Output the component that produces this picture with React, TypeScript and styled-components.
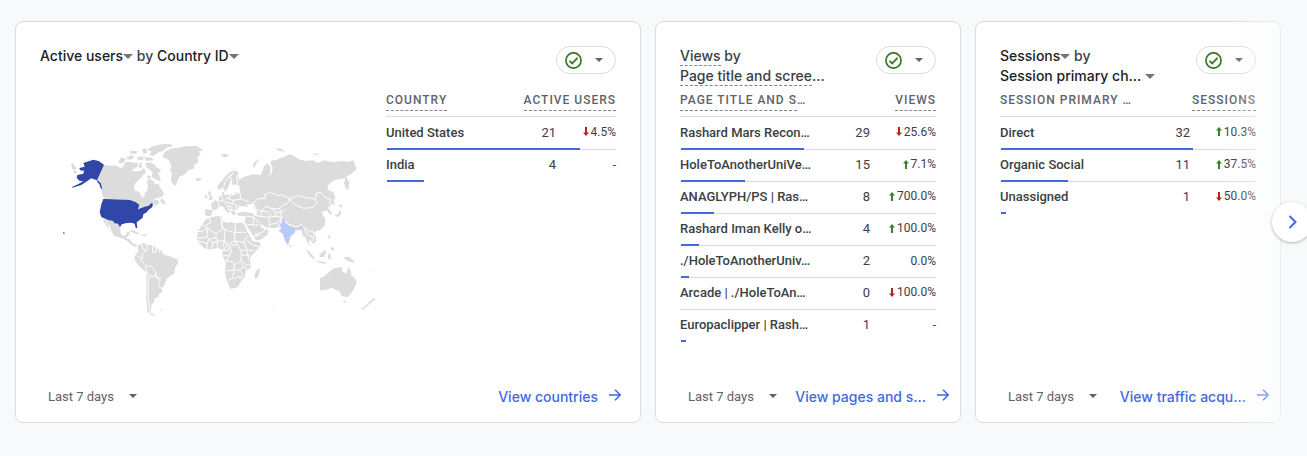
import React from "react";
import styled, { createGlobalStyle } from "styled-components";

const Global = createGlobalStyle`
  *, *::before, *::after { box-sizing: border-box; }
  body {
    margin: 0;
    background: #f8f9fb;
    color: #3c4043;
    font-family: Roboto, "Liberation Sans", sans-serif;
    font-size: 13px;
  }
  button, select { font: inherit; color: inherit; background: none; border: 0; margin: 0; padding: 0; cursor: pointer; }
`;

const Page = styled.main`
  position: relative;
  min-height: 100vh;
  overflow: hidden;
  padding: 21px 26px 33px 15px;
`;

const CardGrid = styled.div`
  display: grid;
  grid-template-columns: repeat(4, minmax(0, 1fr));
  gap: 14px;
`;

const Card = styled.section<{ $wide?: boolean }>`
  grid-column: span ${(p) => (p.$wide ? 2 : 1)};
  display: flex;
  flex-direction: column;
  min-height: 402px;
  padding: 24px 0 6px;
  background: #fff;
  border: 1px solid #dadce0;
  border-radius: 8px;
`;

const CardHead = styled.header`
  display: flex;
  justify-content: space-between;
  align-items: flex-start;
  min-height: 40px;
  padding: 0 24px;
`;

const Title = styled.h2`
  margin: 0;
  font-family: Inter, Roboto, sans-serif;
  font-size: 14px;
  font-weight: 500;
  line-height: 20px;
  white-space: nowrap;
`;

const TitleLine = styled.span`
  display: block;
`;

const Picker = styled.button`
  display: inline-flex;
  align-items: center;
  color: #202124;
  line-height: 20px;
`;

const Hint = styled.span`
  display: inline-block;
  line-height: 19px;
  border-bottom: 1px dashed #80868b;
`;

const Pill = styled.button`
  display: flex;
  align-items: center;
  justify-content: space-between;
  width: 60px;
  height: 28px;
  padding: 0 12px 0 8px;
  border: 1px solid #dadce0;
  border-radius: 14px;
`;

const CardBody = styled.div`
  display: flex;
  flex: 1;
  padding: 0 24px;
`;

const MapPane = styled.div`
  display: flex;
  flex: 1;
  align-items: center;
  min-width: 0;
  padding: 0 6px 3px 0;

  svg { width: 100%; height: auto; }
`;

const TablePane = styled.div<{ $narrow?: boolean }>`
  flex: ${(p) => (p.$narrow ? "0 0 230px" : "1")};
  min-width: 0;
`;

const Table = styled.table`
  width: 100%;
  table-layout: fixed;
  border-collapse: separate;
  border-spacing: 0;
`;

const HeadCell = styled.th<{ $right?: boolean }>`
  height: 31px;
  padding: 4px 0 0;
  border-bottom: 1px solid #dadce0;
  color: #5f6368;
  font-size: 12px;
  font-weight: 500;
  line-height: 20px;
  letter-spacing: 1px;
  text-align: ${(p) => (p.$right ? "right" : "left")};
  vertical-align: top;
  white-space: nowrap;
`;

const Row = styled.tr`
  position: relative;
`;

const Cell = styled.td<{ $kind?: "name" | "value" | "change" }>`
  height: 32px;
  padding: 0 0 2px;
  border-bottom: 1px solid #dadce0;
  text-align: ${(p) => (p.$kind === "name" ? "left" : "right")};
  font-size: ${(p) => (p.$kind === "change" ? "12px" : "13px")};
  font-weight: ${(p) => (p.$kind === "name" ? 500 : 400)};
  white-space: nowrap;

  ${Row}:first-child & { height: 33px; }
  ${Row}:last-child & { border-bottom-color: transparent; }
`;

const Bar = styled.span`
  position: absolute;
  left: 1px;
  bottom: 0;
  height: 2px;
  background: #4169e1;
`;

const Change = styled.span`
  display: inline-flex;
  align-items: center;
  gap: 2px;
`;

const CardFoot = styled.footer<{ $wide?: boolean }>`
  display: flex;
  align-items: center;
  justify-content: space-between;
  height: 40px;
  padding: 0 ${(p) => (p.$wide ? 18 : 10)}px 0 32px;
`;

const Period = styled.label`
  display: flex;
  align-items: center;
  gap: 10px;
  color: #5f6368;

  select {
    appearance: none;
    width: 71px;
    outline: none;
  }
`;

const MoreLink = styled.a`
  display: flex;
  align-items: center;
  gap: 10px;
  color: #4169e1;
  font-family: Inter, Roboto, sans-serif;
  font-size: 14px;
  font-weight: 500;
  text-decoration: none;
  white-space: nowrap;
`;

const EdgeFade = styled.div`
  position: absolute;
  top: 15px;
  right: 0;
  width: 80px;
  height: 414px;
  background: linear-gradient(to right, rgba(249, 250, 251, 0), rgba(249, 250, 251, 0.85));
  pointer-events: none;
`;

const NextButton = styled.button`
  position: absolute;
  top: 202px;
  right: -5px;
  display: flex;
  align-items: center;
  justify-content: center;
  width: 40px;
  height: 40px;
  border-radius: 50%;
  background: #fff;
  box-shadow: 0 1px 3px rgba(60, 64, 67, 0.4);
`;

const Caret = ({ size = 8, color = "#5f6368" }: { size?: number; color?: string }) => (
  <svg width={size} height={size / 2} viewBox="0 0 8 4" aria-hidden="true">
    <path d="M0 0h8L4 4z" fill={color} />
  </svg>
);

const CheckCircle = () => (
  <svg width="17" height="17" viewBox="0 0 18 18" fill="none" stroke="#37752a" aria-hidden="true">
    <circle cx="9" cy="9" r="8" strokeWidth="1.8" />
    <path d="M4.8 9.3l2.8 2.8 5.7-5.8" strokeWidth="1.8" />
  </svg>
);

const TrendArrow = ({ up }: { up: boolean }) => (
  <svg width="6" height="9" viewBox="0 0 6 9" aria-hidden="true">
    <path
      d={up ? "M3 0L0 3.6h2V9h2V3.6h2z" : "M3 9L0 5.4h2V0h2v5.4h2z"}
      fill={up ? "#37832a" : "#b3261e"}
    />
  </svg>
);

const ArrowRight = () => (
  <svg width="14" height="14" viewBox="0 0 14 14" fill="none" stroke="currentColor" strokeWidth="1.6" aria-hidden="true">
    <path d="M1 6h11M7 .8L12.2 6 7 11.2" />
  </svg>
);

const WorldMap = () => (
  <svg viewBox="-30 0 1020 570" role="img" aria-label="Active users by country">
    <g fill="#dcdcdc">
      <path d="M338 60L345 50 362 41 385 38 405 34 440 33 460 45 446 50 452 58 443 66 444 82 430 92 435 100 415 106 404 118 388 126 382 138 378 152 368 148 362 132 366 118 360 108 364 92 356 74 340 68z" />
      <path d="M435 131L444 128 454 130 452 136 441 139zM63 88l6-5 6 12 6 3-8 7-6-2z" />
      <path d="M161 89L180 92 196 91 210 98 236 104 253 109 270 108 282 100 288 112 278 122 266 134 254 146 252 164 268 172 275 187 284 184 284 174 292 166 294 152 290 138 298 132 310 138 316 148 325 146 334 164 343 176 336 186 316 190 308 198 322 192 328 204 316 212 308 204 290 214 267 222 268 210 250 197 210 194 166 192 158 184 155 170 151 150 140 135z" />
      <path d="M205 80L213 67 228 72 220 84 208 86zM216 98L228 80 250 82 256 98 242 108 222 106zM226 68L246 60 252 68 240 74zM262 66L280 64 280 74 264 76zM252 84L262 82 264 96 254 98zM266 86L274 82 276 96 268 100z" />
      <path d="M286 84L300 82 312 88 322 98 332 104 330 114 322 112 330 126 332 140 320 134 304 126 308 114 300 104 290 98zM290 122L300 122 304 130 294 132zM292 44L308 34 335 28 362 27 370 33 350 38 338 48 326 52 310 62 296 60 306 50zM276 44L288 40 292 54 280 56zM282 66L306 68 312 76 290 78zM240 48L262 48 260 56 242 56z" />
      <path d="M330 198L336 190 342 196 348 206 340 208zM160 252L168 254 176 274 180 284 170 274 162 260z" />
      <path d="M170 251L188 256 194 265 203 267 210 277 212 294 218 302 228 300 230 292 240 291 236 302 226 308 237 312 243 318 245 324 262 330 258 335 244 330 232 318 212 308 192 302 184 288 180 272 172 262z" />
      <path d="M236 288L250 286 264 293 272 298 260 297zM276 298l14 1-2 4-12-1z" />
      <path d="M264 332L274 325 282 324 292 330 308 331 318 340 334 346 340 358 358 364 384 374 384 386 376 396 372 416 350 430 345 448 334 462 338 470 326 478 326 486 314 490 312 502 304 510 303 526 302 534 318 541 304 541 292 528 289 490 290 450 290 412 276 402 262 386 253 372 256 360 264 350z" />
      <path d="M328 527l10-4-2 5z" />
    </g>
    <g fill="#dcdcdc" transform="translate(420 0)">
      <path d="M46 256L58 248 78 244 94 244 98 258 112 264 122 261 134 264 160 264 166 276 176 298 188 318 212 323 210 334 196 350 182 364 180 380 184 394 168 410 164 426 152 440 144 456 122 462 112 440 104 412 108 384 97 362 98 346 84 338 66 343 46 342 30 328 21 312 23 290 36 270z" />
      <path d="M206 399L210 406 204 426 197 433 193 424 197 410z" />
      <path d="M46 222L68 226 66 236 60 243 50 244 45 238zM62 206L72 200 76 194 86 202 84 212 86 219 74 226 66 222zM56 168L62 170 62 178 68 188 66 194 55 195 60 184 54 178zM45 181L52 180 52 190 45 191z" />
      <path d="M86 186L98 180 96 170 102 172 104 180 120 178 134 182 134 172 150 172 148 152 138 148 140 142 160 126 190 118 212 120 218 108 222 94 232 84 242 96 240 118 232 124 244 118 248 100 242 86 242 78 260 74 280 66 300 57 316 66 330 74 346 78 370 76 382 84 402 76 430 82 452 78 474 80 490 76 500 104 490 110 480 120 468 124 478 140 476 166 466 158 462 144 466 130 452 132 438 134 424 142 412 152 414 164 430 172 436 188 428 206 420 214 414 218 426 234 420 240 412 226 400 228 396 236 406 252 404 272 392 284 376 290 366 290 376 304 380 318 370 326 358 312 358 324 366 338 352 322 346 306 338 302 334 286 320 284 308 286 296 284 284 270 276 262 276 276 262 278 242 280 226 276 220 270 210 268 214 278 236 286 232 300 208 316 198 316 184 294 170 272 164 258 168 244 144 242 142 234 160 230 184 234 198 240 202 232 194 220 190 204 180 208 170 208 174 216 160 214 148 212 140 226 132 226 138 238 128 240 122 228 112 214 106 208 116 226 122 230 112 234 98 214 86 214 88 204z" />
      <path d="M84 164L82 152 92 142 104 126 118 112 136 106 146 112 144 120 148 140 134 150 124 148 128 134 120 142 114 160 106 170 98 158z" />
      <path d="M188 98L192 82 212 70 202 80 194 96zM92 60L104 56 118 60 104 68zM256 38L274 42 286 50 268 48zM366 54L380 56 392 58 376 60zM428 192L434 200 434 214 430 206zM446 206L458 212 450 218zM450 220L454 238 442 246 432 242 446 236z" />
      <path d="M400 262L406 258 404 270zM366 290l8-2 0 6zM298 326l6 6-4 6zM346 342L356 348 370 364 374 376 362 366zM388 360L398 350 408 344 408 354 402 366 390 366zM412 304L420 300 420 314zM424 336L432 338 430 350 422 342zM414 358L426 354 420 360 424 374 414 370zM376 378L400 380 414 384 396 386zM462 366L476 366 496 382 484 382 466 374z" />
      <path d="M390 430L406 422 418 410 430 400 444 398 456 396 456 408 470 416 474 396 482 406 484 420 498 434 498 450 484 474 474 486 456 484 448 468 438 466 428 458 402 466 390 466z" />
      <path d="M460 497l8 0-2 6-4 0zM552 490l4 3-18 14-5-2zM534 506l4 2-20 16-5-2zM546 404l8 6-2 2zM576 416l8-2 0 3zM250 517l5 2-4 2z" />
    </g>
    <g fill="none" stroke="#fff" strokeWidth="3" strokeLinejoin="round">
      <path d="M274 324L278 340 290 346 276 356 278 370 262 364M290 330L292 344 284 350M308 332L308 352 318 352 320 340M328 344L330 354M278 370L272 376 286 388 290 410M290 392L304 394 312 404 318 414 318 426 330 436 326 448M290 410L298 424 312 424 318 416M318 426L334 430M324 452L338 462M298 424L294 450 295 490 298 520 302 534" />
      <path d="M267 222L290 214 308 205" strokeWidth="1" />
    </g>
    <g fill="none" stroke="#fff" strokeWidth="3" strokeLinejoin="round" transform="translate(420 0)">
      <path d="M58 248L62 262 44 274 36 270M44 274L78 296 98 284 94 262 92 244M98 258L96 270 102 282 136 294 136 262M136 292L168 292M24 290L40 288 52 276M52 278L52 306 24 310M78 296L78 308 56 312 52 326 40 322 24 318M78 308L82 318 104 318 104 284M56 312L68 324 82 318M52 326L50 342M68 324L66 342M82 318L82 338M104 318L98 336M104 318L112 330 134 318 134 292M112 330L98 346M134 318L162 322 172 302M134 318L142 328 118 334 114 346 98 346M142 328L152 346 172 346 162 322M118 334L124 348 118 362 100 362M152 346L154 360 178 360M154 360L152 378 170 390 184 390M118 362L108 378 128 380 132 390 152 378M132 390L132 404 106 408M132 404L128 430 116 436M132 404L148 406 160 396 154 384M148 406L158 416 154 430 144 424 132 432M160 396L170 400 168 410M172 346L194 346M172 318L190 330 208 336M170 346L178 376" />
      <path d="M172 268L188 270 192 246 170 244M188 270L206 270M192 246L206 264M194 300L220 290 228 282M192 304L210 300M190 240L210 244 236 246 240 278M236 246L260 244 276 248 262 264 242 268M276 248L270 268 262 278M210 244L216 228 232 230 244 242M216 228L198 224 196 214 190 206 202 192 226 190 224 178 244 172 262 182 276 180 300 192 292 206 278 210 268 220 246 222 232 214 220 220 216 228M246 222L256 232 274 232 268 220M256 232L256 244M300 192L322 182 350 188 376 192 382 204 366 218 340 220 312 208 300 192M376 192L380 174 392 172 404 186 422 194 418 212M276 248L272 234 278 228M282 252L292 266 318 276 336 268M336 270L346 280 356 288 370 288M346 280L348 294 358 302 370 306 370 318M280 228L288 224" />
      <path d="M96 184L98 196 88 198M98 196L110 202 104 208M120 178L118 192 108 188M118 192L130 196 126 206 110 202M130 196L152 192 150 172M152 192L176 200M126 206L140 210 138 222M112 212L126 216 124 228M138 148L150 172 134 176M144 168L128 168M100 158L106 140 122 118M124 148L122 124 130 112M142 148L140 120M140 226L118 226" />
    </g>
    <path
      fill="#3046a8"
      d="M162 89L146 78 130 74 116 79 100 84 104 95 88 99 90 106 102 107 100 116 82 120 80 128 88 137 100 139 84 148 65 157 68 158 94 150 112 138 124 130 132 133 142 136 152 144 157 162 152 160 148 148 140 138zM73 108l5 3-3 2zM36 286l2 1zM39 290l6 4-4 4z"
    />
    <path
      fill="#3046a8"
      d="M165 192L240 195 258 202 268 210 264 223 284 215 296 212 304 204 309 206 307 216 296 224 290 232 280 238 278 248 260 262 262 280 257 278 254 266 244 263 230 264 215 268 210 277 204 266 194 265 188 257 174 255 154 246 149 232 154 208 160 192z"
    />
    <path
      fill="#b8c9fa"
      d="M696 250L706 254 704 264 716 272 736 280 748 280 757 270 758 276 751 282 736 284 734 294 722 304 718 318 714 330 706 320 698 296 686 288 694 280 690 268 698 262z"
    />
  </svg>
);

type Metric = { name: string; value: number; share: number; change: string; dir?: "up" | "down" };

type TableProps = {
  dimension: React.ReactNode;
  metric: string;
  changeWidth: number;
  rows: Metric[];
};

const MetricTable = ({ dimension, metric, changeWidth, rows }: TableProps) => (
  <Table>
    <colgroup>
      <col />
      <col style={{ width: 40 }} />
      <col style={{ width: changeWidth }} />
    </colgroup>
    <thead>
      <tr>
        <HeadCell scope="col">{dimension}</HeadCell>
        <HeadCell scope="col" colSpan={2} $right>
          <Hint>{metric}</Hint>
        </HeadCell>
      </tr>
    </thead>
    <tbody>
      {rows.map((r) => (
        <Row key={r.name}>
          <Cell $kind="name">
            {r.name}
            <Bar style={{ width: `${r.share}%` }} />
          </Cell>
          <Cell $kind="value">{r.value}</Cell>
          <Cell $kind="change">
            <Change>
              {r.dir && <TrendArrow up={r.dir === "up"} />}
              {r.change}
            </Change>
          </Cell>
        </Row>
      ))}
    </tbody>
  </Table>
);

const StatusPill = () => (
  <Pill aria-label="Data quality">
    <CheckCircle />
    <Caret />
  </Pill>
);

const Footer = ({ link, wide }: { link: string; wide?: boolean }) => (
  <CardFoot $wide={wide}>
    <Period>
      <select aria-label="Date range" defaultValue="7">
        <option value="7">Last 7 days</option>
      </select>
      <Caret />
    </Period>
    <MoreLink href="#">
      {link}
      <ArrowRight />
    </MoreLink>
  </CardFoot>
);

const countries: Metric[] = [
  { name: "United States", value: 21, share: 84, change: "4.5%", dir: "down" },
  { name: "India", value: 4, share: 16, change: "-" },
];

const pages: Metric[] = [
  { name: "Rashard Mars Recon…", value: 29, share: 48, change: "25.6%", dir: "down" },
  { name: "HoleToAnotherUniVe…", value: 15, share: 25, change: "7.1%", dir: "up" },
  { name: "ANAGLYPH/PS | Ras…", value: 8, share: 13, change: "700.0%", dir: "up" },
  { name: "Rashard Iman Kelly o…", value: 4, share: 7, change: "100.0%", dir: "up" },
  { name: "./HoleToAnotherUniv…", value: 2, share: 3, change: "0.0%" },
  { name: "Arcade | ./HoleToAn…", value: 0, share: 0, change: "100.0%", dir: "down" },
  { name: "Europaclipper | Rash…", value: 1, share: 2, change: "-" },
];

const channels: Metric[] = [
  { name: "Direct", value: 32, share: 75, change: "10.3%", dir: "up" },
  { name: "Organic Social", value: 11, share: 26, change: "37.5%", dir: "up" },
  { name: "Unassigned", value: 1, share: 2, change: "50.0%", dir: "down" },
];

export default function App() {
  return (
    <>
      <Global />
      <Page>
        <CardGrid>
          <Card $wide>
            <CardHead>
              <Title>
                <Picker>Active users<Caret size={10} color="#757575" /></Picker> by{" "}
                <Picker>Country ID<Caret size={10} color="#757575" /></Picker>
              </Title>
              <StatusPill />
            </CardHead>
            <CardBody>
              <MapPane>
                <WorldMap />
              </MapPane>
              <TablePane $narrow>
                <MetricTable dimension={<Hint>COUNTRY</Hint>} metric="ACTIVE USERS" changeWidth={60} rows={countries} />
              </TablePane>
            </CardBody>
            <Footer link="View countries" wide />
          </Card>

          <Card>
            <CardHead>
              <Title>
                <TitleLine><Hint>Views</Hint> by</TitleLine>
                <TitleLine><Hint>Page title and scree</Hint>…</TitleLine>
              </Title>
              <StatusPill />
            </CardHead>
            <CardBody>
              <TablePane>
                <MetricTable dimension={<><Hint>PAGE TITLE AND S</Hint>…</>} metric="VIEWS" changeWidth={66} rows={pages} />
              </TablePane>
            </CardBody>
            <Footer link="View pages and s…" />
          </Card>

          <Card>
            <CardHead>
              <Title>
                <TitleLine><Picker>Sessions<Caret size={10} color="#757575" /></Picker> by</TitleLine>
                <TitleLine><Picker>Session primary ch…&nbsp;<Caret size={10} color="#757575" /></Picker></TitleLine>
              </Title>
              <StatusPill />
            </CardHead>
            <CardBody>
              <TablePane>
                <MetricTable dimension="SESSION PRIMARY …" metric="SESSIONS" changeWidth={66} rows={channels} />
              </TablePane>
            </CardBody>
            <Footer link="View traffic acqu…" />
          </Card>
        </CardGrid>
        <EdgeFade />
        <NextButton aria-label="Next cards">
          <svg width="9" height="14" viewBox="0 0 9 14" fill="none" stroke="#4169e1" strokeWidth="2" aria-hidden="true">
            <path d="M1.5 1l6 6-6 6" />
          </svg>
        </NextButton>
      </Page>
    </>
  );
}
